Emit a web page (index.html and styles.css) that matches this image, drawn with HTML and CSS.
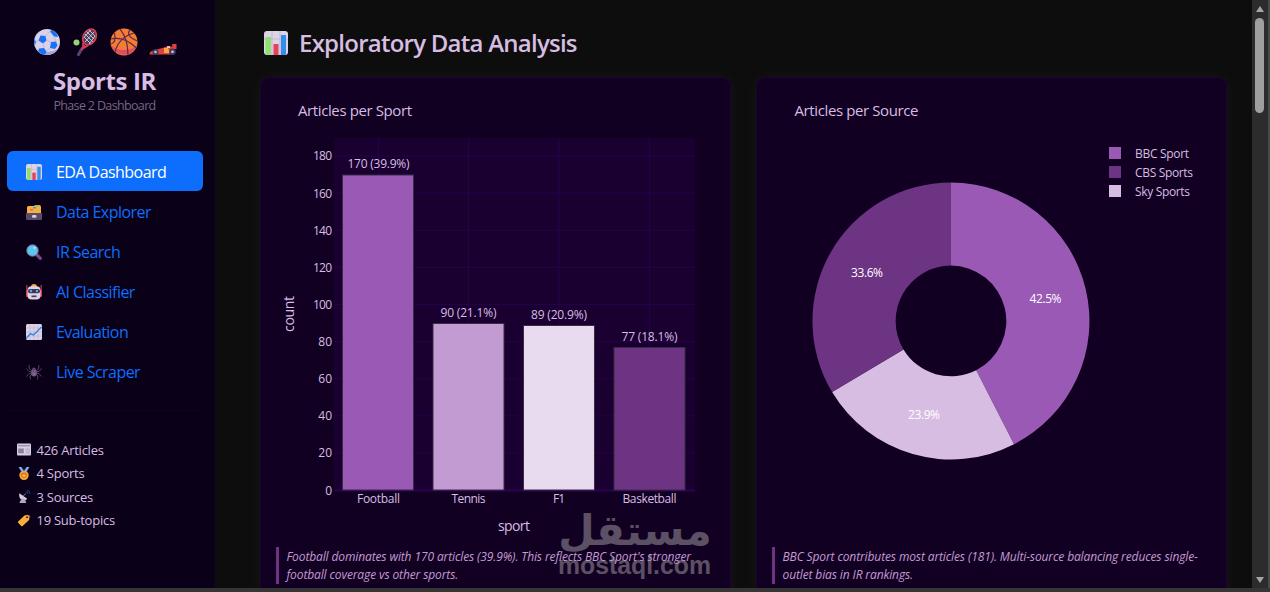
FILE: index.html
```html
<!DOCTYPE html>
<html lang="en">
<head>
  <meta charset="UTF-8">
  <title>Sports IR - Phase 2 Dashboard</title>
  <link rel="stylesheet" href="styles.css">
</head>
<body>
  <!-- icon set -->
  <svg class="defs" width="0" height="0">
    <symbol id="i-chart" viewBox="0 0 24 24">
      <rect width="24" height="24" rx="3" fill="#dfd3e6"/>
      <path d="M0 8h24M8 0v24M16 0v24" stroke="#c4b5d0" stroke-width="1"/>
      <path d="M1.500 6h5.500v18h-4a1.500 1.500 0 0 1-1.500-1.500z" fill="#8fe06f"/>
      <path d="M9.500 13h5v11h-5z" fill="#e5405e"/>
      <path d="M17 4h5v18.500a1.500 1.500 0 0 1-1.500 1.500H17z" fill="#2f8ff0"/>
    </symbol>
    <symbol id="i-ball" viewBox="0 0 28 28">
      <circle cx="14" cy="14" r="13" fill="#d9d0ea"/>
      <path d="M3 21a13 13 0 0 0 22 0q-11 6-22 0z" fill="#aaa0dc"/>
      <path d="M17 3.500l1.500-1.700a13 13 0 0 1 6 5l.5 2.200-4-.5z" fill="#1673f5"/>
      <path d="M7.500 7.500l5 .5 1 4.500-3.500 3-4.500-3zM18 14l5-.5 1.500 4-2.500 3.500-5-1z" fill="#1673f5"/>
      <path d="M1.500 10.500L3 14l-1.300 3.500A13 13 0 0 1 1.500 10.500zM6 20.500l5-.5 2.500 3.500-1.500 3.200A13 13 0 0 1 5.500 23.500z" fill="#1673f5"/>
      <path d="M13.500 12.500l4.500 1.500M12.500 8l4.500-4.500M10 15.500l1 4.500M13.500 23.500l3.500-3.500M3 14l2.500-1.500M21 8.500l2 5" stroke="#b9b0d6" stroke-width=".8"/>
    </symbol>
    <symbol id="i-tennis" viewBox="0 0 28 28">
      <circle cx="4.500" cy="14.500" r="3" fill="#93d86c"/>
      <path d="M10 20.500l-3.500 6" stroke="#5c3f78" stroke-width="3" stroke-linecap="round"/>
      <path d="M13 17.500l-3.500 4.500M11 14.500v6l5-3" stroke="#d83a55" stroke-width="1.800" fill="none"/>
      <ellipse cx="17.500" cy="9" rx="6.300" ry="8.400" transform="rotate(28 17.500 9)" fill="#48405a" stroke="#dc3c55" stroke-width="1.700"/>
      <path d="M13 6l8 8M14.500 3.500l7.500 7.500M17 2l6 6M12 9l6.500 6.500M22 4l-9 10M18.500 2L12 9.500M23 8l-6 8" stroke="#d6cce0" stroke-width=".9"/>
    </symbol>
    <symbol id="i-basket" viewBox="0 0 28 28">
      <circle cx="14" cy="14" r="13.500" fill="#f47c36"/>
      <path d="M1 17a13.500 13.500 0 0 0 26 0q-4 5-13 5T1 17z" fill="#e04c62"/>
      <g fill="none" stroke="#5a2b45" stroke-width="1.200">
        <path d="M10 1.200q8 9 8 26M1 11q13-3 25.500 9M24 5Q9 9 5 24M4.500 5q2 10-3.500 11M20 2q-5 6 7.500 11"/>
      </g>
    </symbol>
    <symbol id="i-car" viewBox="0 0 28 28">
      <path d="M.5 26q0-3 5-4l8-2 4-1.500h7v6l-3 2H1z" fill="#dc4340"/>
      <path d="M23 16h4.500v5H24z" fill="#dc4340"/>
      <path d="M15 20h4l2 5h-6z" fill="#f7a83a"/>
      <circle cx="6.500" cy="24" r="3" fill="#3c3a5c"/><circle cx="6.500" cy="24" r="1.300" fill="#c9c2dc"/>
      <circle cx="23.500" cy="23.800" r="3.300" fill="#3c3a5c"/><circle cx="23.500" cy="23.800" r="1.400" fill="#c9c2dc"/>
      <path d="M18 19h3" stroke="#eee" stroke-width="1.500"/>
    </symbol>
    <symbol id="i-box" viewBox="0 0 16 16">
      <path d="M1 3.500Q1 2 2.500 2H8l1-1h4q2 0 2 2v7H1z" fill="#f6b13e"/>
      <path d="M9.500 1H12v2H9.500z" fill="#7cc76a"/><path d="M7 3h3v1.500H7z" fill="#5a8fe8"/>
      <path d="M4 5h3v1.500H4z" fill="#ee6a43"/>
      <path d="M0 9h16v5.500Q16 16 14.500 16h-13Q0 16 0 14.500z" fill="#5b4b68"/>
      <rect x="6" y="11" width="4.500" height="2.800" rx="1.200" fill="#d9d0e6"/>
    </symbol>
    <symbol id="i-search" viewBox="0 0 16 16">
      <path d="M11 11l3.300 3.300" stroke="#7a4a86" stroke-width="3.200" stroke-linecap="round"/>
      <circle cx="6.500" cy="6.500" r="5.700" fill="#5cc4f2" stroke="#80708f" stroke-width="1"/>
      <circle cx="8.500" cy="3.800" r="1.100" fill="#bfeafd"/>
    </symbol>
    <symbol id="i-robot" viewBox="0 0 16 16">
      <path d="M.8 1v7M15.200 1v7" stroke="#c5374d" stroke-width="1.200"/>
      <rect x="0" y="6" width="16" height="7" rx="1.500" fill="#d84050"/>
      <path d="M5 3q0-3 3-3t3 3z" fill="#f7ab3a"/>
      <rect x="1.500" y="2.200" width="13" height="13.300" rx="4" fill="#ddd2e6"/>
      <rect x="2" y="5" width="12" height="4.200" rx="2" fill="#3c3658"/>
      <circle cx="5" cy="7" r="1.200" fill="#43b4f5"/><circle cx="11" cy="7" r="1.200" fill="#43b4f5"/>
      <path d="M5.500 12.300h5" stroke="#4a3d5c" stroke-width="1.700"/>
    </symbol>
    <symbol id="i-trend" viewBox="0 0 16 16">
      <rect width="16" height="16" rx="1.500" fill="#ddd3e6"/>
      <path d="M0 4h16M0 8h16M0 12h16M4 0v16M8 0v16M12 0v16" stroke="#c0b4cf" stroke-width=".7"/>
      <path d="M0 14.500l4.500-5 3 1.500L15.500 3" stroke="#2c86ee" stroke-width="1.400" fill="none"/>
    </symbol>
    <symbol id="i-spider" viewBox="0 0 16 16">
      <path d="M6 7L3.500 5 3 1M10 7l2.500-2L13 1M6 8L3 7.500.5 4.500M10 8l3-.5 2.500-3M6 9l-3 .5-2.500 3M10 9l3 .5 2.500 3M6 10l-2 2 .5 3.500M10 10l2 2-.5 3.500" stroke="#54405f" stroke-width="1" fill="none"/>
      <circle cx="8" cy="5.500" r="2" fill="#57446a"/>
      <ellipse cx="8" cy="9" rx="2.900" ry="3.600" fill="#6d5880"/>
      <path d="M8 8.500l1.200 1.500L8 11.500 6.800 10z" fill="#a06a9c"/>
    </symbol>
    <symbol id="i-news" viewBox="0 0 14 12">
      <rect width="14" height="12" rx="1" fill="#d8cde2"/>
      <path d="M1 2.300h12" stroke="#83778f" stroke-width="1"/>
      <rect x="1.200" y="5" width="5.600" height="4.800" fill="#8d8297"/>
      <path d="M8.500 5.500H11M8.500 7.500H11M8.500 9.500H11M12 5v6" stroke="#a699b3" stroke-width=".8"/>
    </symbol>
    <symbol id="i-medal" viewBox="0 0 14 14">
      <path d="M1 0h3.500L8 5 5 7zM13 0H9.500L6 5l3 2z" fill="#3d80e8"/>
      <path d="M2.500 0l4 6M11.500 0l-4 6" stroke="#ded6e8" stroke-width="1"/>
      <circle cx="7" cy="9" r="5" fill="#f8a834"/>
      <circle cx="7" cy="9" r="3" fill="#d96a2c"/>
      <path d="M7 6.700l.8 1.600 1.700.2-1.300 1.200.4 1.700L7 10.500l-1.600.9.400-1.700-1.300-1.200 1.700-.2z" fill="#fbc14d"/>
    </symbol>
    <symbol id="i-dish" viewBox="0 0 14 14">
      <path d="M2 3.500q-1 5 2.500 7t6-1z" fill="#d8cfe2"/>
      <path d="M4.500 9L2 14h7.500L8 10z" fill="#b3a8c4"/>
      <path d="M6 6.500L9 4" stroke="#8f84a0" stroke-width="1"/>
      <path d="M9 2a3 3 0 0 1 2.500 2.500M10 .5a3.500 3.500 0 0 1 3.500 3.500" stroke="#1c4ea8" stroke-width="1" fill="none"/>
    </symbol>
    <symbol id="i-tag" viewBox="0 0 14 14">
      <path d="M7.500 1.500L11 .8l2 2-.5 3.700L5.500 13q-.8.600-1.500 0L.7 9.500q-.7-.8 0-1.500z" fill="#f9ae3b"/>
      <circle cx="10.300" cy="3.500" r="1.100" fill="#3a1d3e"/>
      <path d="M10.500 3.300Q13.500-.5 13.500 3.500" stroke="#8f7c9a" stroke-width=".7" fill="none"/>
    </symbol>
  </svg>

  <div class="app">
    <aside class="sidebar">
      <div class="brand">
        <div class="brand-icons">
          <svg><use href="#i-ball"/></svg>
          <svg><use href="#i-tennis"/></svg>
          <svg><use href="#i-basket"/></svg>
          <svg><use href="#i-car"/></svg>
        </div>
        <h1>Sports IR</h1>
        <p>Phase 2 Dashboard</p>
      </div>

      <nav class="nav">
        <a class="nav-link active"><svg><use href="#i-chart"/></svg>EDA Dashboard</a>
        <a class="nav-link"><svg><use href="#i-box"/></svg>Data Explorer</a>
        <a class="nav-link"><svg><use href="#i-search"/></svg>IR Search</a>
        <a class="nav-link"><svg><use href="#i-robot"/></svg>AI Classifier</a>
        <a class="nav-link"><svg><use href="#i-trend"/></svg>Evaluation</a>
        <a class="nav-link"><svg><use href="#i-spider"/></svg>Live Scraper</a>
      </nav>

      <ul class="stats">
        <li><svg><use href="#i-news"/></svg>426 Articles</li>
        <li><svg><use href="#i-medal"/></svg>4 Sports</li>
        <li><svg><use href="#i-dish"/></svg>3 Sources</li>
        <li><svg><use href="#i-tag"/></svg>19 Sub-topics</li>
      </ul>
    </aside>

    <main class="main">
      <h2 class="page-title"><svg><use href="#i-chart"/></svg>Exploratory Data Analysis</h2>

      <div class="cards">
        <section class="card">
          <svg class="chart" viewBox="0 0 439 451">
            <text class="chart-title" x="22" y="23" textLength="114">Articles per Sport</text>
            <rect class="plot-bg" x="58" y="45" width="361" height="352"/>
            <path class="grid" d="M58 359.900h361M58 322.800h361M58 285.700h361M58 248.600h361M58 211.500h361M58 174.400h361M58 137.300h361M58 100.200h361M58 63.100h361M102.500 45v352M192.500 45v352M283 45v352M373.500 45v352"/>
            <path class="zero" d="M58 397.500h361"/>
            <g class="bars">
              <rect x="66.500" y="82" width="71" height="315" fill="#9b59b6"/>
              <rect x="157" y="230.500" width="71" height="166.500" fill="#c39bd3"/>
              <rect x="247.500" y="232.500" width="71" height="164.500" fill="#e8daef"/>
              <rect x="338" y="254.500" width="71" height="142.500" fill="#6c3483"/>
            </g>
            <g class="tick mid">
              <text x="102.500" y="75" textLength="62">170 (39.9%)</text>
              <text x="192.500" y="224" textLength="56">90 (21.1%)</text>
              <text x="283" y="226" textLength="56">89 (20.9%)</text>
              <text x="373.500" y="248" textLength="56">77 (18.1%)</text>
              <text x="102.500" y="410" textLength="43">Football</text>
              <text x="192.500" y="410" textLength="34">Tennis</text>
              <text x="283" y="410" textLength="12">F1</text>
              <text x="373.500" y="410" textLength="54">Basketball</text>
            </g>
            <g class="tick end">
              <text x="56" y="401.500">0</text>
              <text x="56" y="364">20</text>
              <text x="56" y="327">40</text>
              <text x="56" y="290">60</text>
              <text x="56" y="253">80</text>
              <text x="56" y="215.500" textLength="19">100</text>
              <text x="56" y="178.500" textLength="19">120</text>
              <text x="56" y="141.500" textLength="19">140</text>
              <text x="56" y="104.500" textLength="19">160</text>
              <text x="56" y="67" textLength="19">180</text>
            </g>
            <text class="axis-title mid" x="238" y="438" textLength="32">sport</text>
            <text class="axis-title mid" transform="translate(18 221) rotate(-90)" textLength="36">count</text>
          </svg>
          <p class="insight">Football dominates with 170 articles (39.9%). This reflects BBC Sport's stronger<br>football coverage vs other sports.</p>
        </section>

        <section class="card">
          <svg class="chart" viewBox="0 0 439 451">
            <text class="chart-title" x="22.500" y="23" textLength="124">Articles per Source</text>
            <g transform="translate(179 228)">
              <path fill="#9b59b6" d="M0-138.500A138.500 138.500 0 0 1 63 123.300L25.200 49.300A55.400 55.400 0 0 0 0-55.400z"/>
              <path fill="#d7bde2" d="M63 123.300A138.500 138.500 0 0 1-118.900 71.100L-47.500 28.400A55.400 55.400 0 0 0 25.200 49.300z"/>
              <path fill="#6c3483" d="M-118.900 71.100A138.500 138.500 0 0 1 0-138.500V-55.400A55.400 55.400 0 0 0-47.500 28.400z"/>
            </g>
            <g class="tick mid pie-label">
              <text x="273.500" y="210" textLength="32">42.5%</text>
              <text x="95" y="184" textLength="32">33.6%</text>
              <text x="152" y="326" textLength="32">23.9%</text>
            </g>
            <rect x="337" y="54" width="12" height="12" fill="#9b59b6"/>
            <rect x="337" y="73" width="12" height="12" fill="#6c3483"/>
            <rect x="337" y="92" width="12" height="12" fill="#d7bde2"/>
            <g class="tick">
              <text x="363" y="64.500" textLength="54">BBC Sport</text>
              <text x="363" y="84" textLength="58">CBS Sports</text>
              <text x="363" y="102.500" textLength="55">Sky Sports</text>
            </g>
          </svg>
          <p class="insight">BBC Sport contributes most articles (181). Multi-source balancing reduces single-<br>outlet bias in IR rankings.</p>
        </section>
      </div>
    </main>

    <div class="scrollbar">
      <span class="arrow-up"></span>
      <span class="thumb"></span>
      <span class="arrow-down"></span>
    </div>
  </div>

  <svg class="watermark" viewBox="0 0 156 72">
    <text class="wm-ar" transform="translate(78 37)">مستقل</text>
    <text class="wm-en" x="1" y="66" textLength="153" lengthAdjust="spacingAndGlyphs">mostaql.com</text>
  </svg>
</body>
</html>
```
FILE: styles.css
```css
* {
  box-sizing: border-box;
}

body {
  margin: 0;
  height: 592px;
  overflow: hidden;
  background: #363636;
  font-family: 'Open Sans', 'Noto Sans', sans-serif;
  color: #d7bde2;
}

.defs {
  position: absolute;
}

.app {
  display: flex;
  height: 588px;
  overflow: hidden;
  background: #0d0d0d;
}

/* sidebar */
.sidebar {
  width: 215px;
  flex: none;
  padding: 28px 12px 0 7px;
  background: #0a0018;
  border-right: 1px solid #10001f;
}

.brand {
  text-align: center;
}

.brand-icons {
  display: flex;
  justify-content: center;
  gap: 10.5px;
  margin-left: 1px;
}

.brand-icons svg {
  width: 28px;
  height: 28px;
}

.brand h1 {
  margin: 9px 0 0;
  font-size: 24px;
  line-height: 32px;
  font-weight: 700;
  letter-spacing: -0.4px;
}

.brand p {
  margin: 0;
  font-size: 12.5px;
  line-height: 17px;
  letter-spacing: -0.65px;
  color: #75687f;
}

.nav {
  margin-top: 37px;
  padding-bottom: 19px;
  border-bottom: 1px solid #12002a;
}

.nav-link {
  display: flex;
  align-items: center;
  gap: 14px;
  height: 40px;
  padding: 2px 19px 0;
  border-radius: 6px;
  font-size: 16px;
  letter-spacing: -0.55px;
  color: #0d6efd;
}

.nav-link.active {
  width: 196px;
  background: #0d6efd;
  color: #fff;
}

.nav-link svg {
  width: 16px;
  height: 16px;
}

.stats {
  list-style: none;
  margin: 27px 0 0;
  padding: 0 0 0 10px;
  font-size: 13px;
  letter-spacing: -0.25px;
}

.stats li {
  display: flex;
  align-items: center;
  gap: 5.5px;
  height: 23.5px;
}

.stats svg {
  width: 14px;
  height: 13px;
}

/* main */
.main {
  flex: 1;
  padding: 27px 25px 0 45px;
}

.page-title {
  display: flex;
  align-items: center;
  gap: 11px;
  height: 32px;
  margin: 0 0 18px;
  padding-left: 4px;
  font-size: 24px;
  line-height: 32px;
  font-weight: 600;
  letter-spacing: -0.75px;
}

.page-title svg {
  width: 24px;
  height: 24px;
}

.cards {
  display: grid;
  grid-template-columns: 471px 471px;
  gap: 25px;
}

.card {
  height: 530px;
  padding: 15px;
  background: #120022;
  border: 1px solid #1d0038;
  border-radius: 10px;
  box-shadow: 0 0 15px rgba(215, 189, 226, 0.05);
}

.chart {
  display: block;
  width: 439px;
  height: 451px;
}

.chart text {
  fill: #d7bde2;
}

.chart-title {
  font-size: 15px;
}

.axis-title {
  font-size: 14px;
}

.tick {
  font-size: 12px;
}

.mid {
  text-anchor: middle;
}

.end {
  text-anchor: end;
}

.chart .pie-label text {
  fill: #fff;
}

.plot-bg {
  fill: #1a0030;
}

.grid {
  stroke: #26004a;
  stroke-width: 1;
}

.zero {
  stroke: #2c0052;
  stroke-width: 2;
}

.bars rect {
  stroke: #3a2a45;
  stroke-width: 1;
}

.insight {
  margin: 3px 0 0;
  padding: 1px 0 0 7.5px;
  border-left: 3px solid #6c3483;
  font-size: 12px;
  line-height: 17.8px;
  font-style: italic;
  letter-spacing: -0.12px;
  white-space: nowrap;
  color: #c39bd3;
}

/* page scrollbar */
.scrollbar {
  display: flex;
  flex-direction: column;
  align-items: center;
  width: 18px;
  padding: 6px 1px 5px 0;
  background: #2c2c2c;
  border-right: 2px solid #4a4a4a;
}

.thumb {
  width: 9px;
  height: 95px;
  margin: 6px 0 auto;
  border-radius: 5px;
  background: #9f9f9f;
}

.arrow-up,
.arrow-down {
  border: 4px solid transparent;
}

.arrow-up {
  border-top: 0;
  border-bottom: 6px solid #a9a2ab;
}

.arrow-down {
  border-bottom: 0;
  border-top: 6px solid #a9a2ab;
}

.watermark {
  position: absolute;
  left: 557px;
  top: 508px;
  width: 156px;
  height: 72px;
  overflow: visible;
  opacity: 0.5;
  fill: #a59fa6;
}

.wm-ar {
  font-family: 'DejaVu Sans', sans-serif;
  font-size: 42px;
  font-weight: 700;
  text-anchor: middle;
}

.wm-en {
  font-family: 'Liberation Sans', sans-serif;
  font-size: 25px;
  font-weight: 700;
}
```
